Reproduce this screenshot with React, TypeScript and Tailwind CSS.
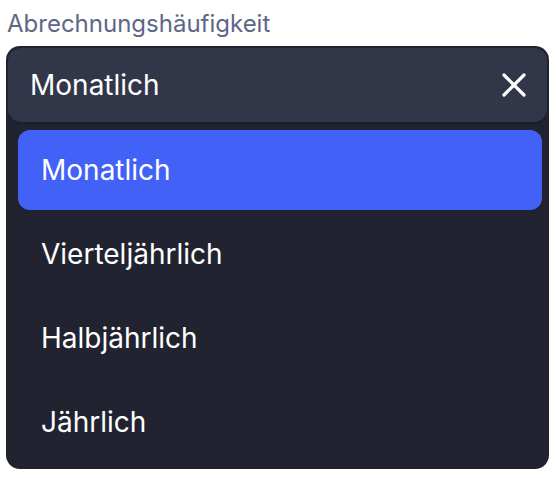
import React from "react";

const items = ["Monatlich", "Vierteljährlich", "Halbjährlich", "Jährlich"];

export default function App() {
  return (
    <div className="min-h-[478px] bg-white pt-[10px] font-['Inter',sans-serif]">
      <div className="pl-[7px] text-[24px] leading-[28px] text-[#5d6786]">Abrechnungshäufigkeit</div>
      <div className="ml-[6px] mt-[8px] w-[543px] rounded-[14px] bg-[#212430] p-[2px]">
        <div className="flex h-[74px] items-center justify-between rounded-[13px] bg-[#313649] pl-[22px] pr-[21px] shadow-[0_2px_0_#1b1e29]">
          <span className="text-[28px] leading-[34px] text-white">Monatlich</span>
          <svg width="24" height="24" viewBox="0 0 24 24" fill="none">
            <path d="M2 2L22 22M22 2L2 22" stroke="white" strokeWidth="3.2" strokeLinecap="round" />
          </svg>
        </div>
        <div className="mt-[8px] flex flex-col gap-[4px] pb-[5px] pl-[10px] pr-[5px]">
          {items.map((it, i) => (
            <div
              key={it}
              className={
                i === 0
                  ? "flex h-[80px] items-center rounded-[12px] bg-[#4262f7] pl-[23px] text-[28px] leading-[34px] text-white"
                  : "flex h-[80px] items-center rounded-[12px] pl-[23px] text-[28px] leading-[34px] text-white"
              }
            >
              {it}
            </div>
          ))}
        </div>
      </div>
    </div>
  );
}
